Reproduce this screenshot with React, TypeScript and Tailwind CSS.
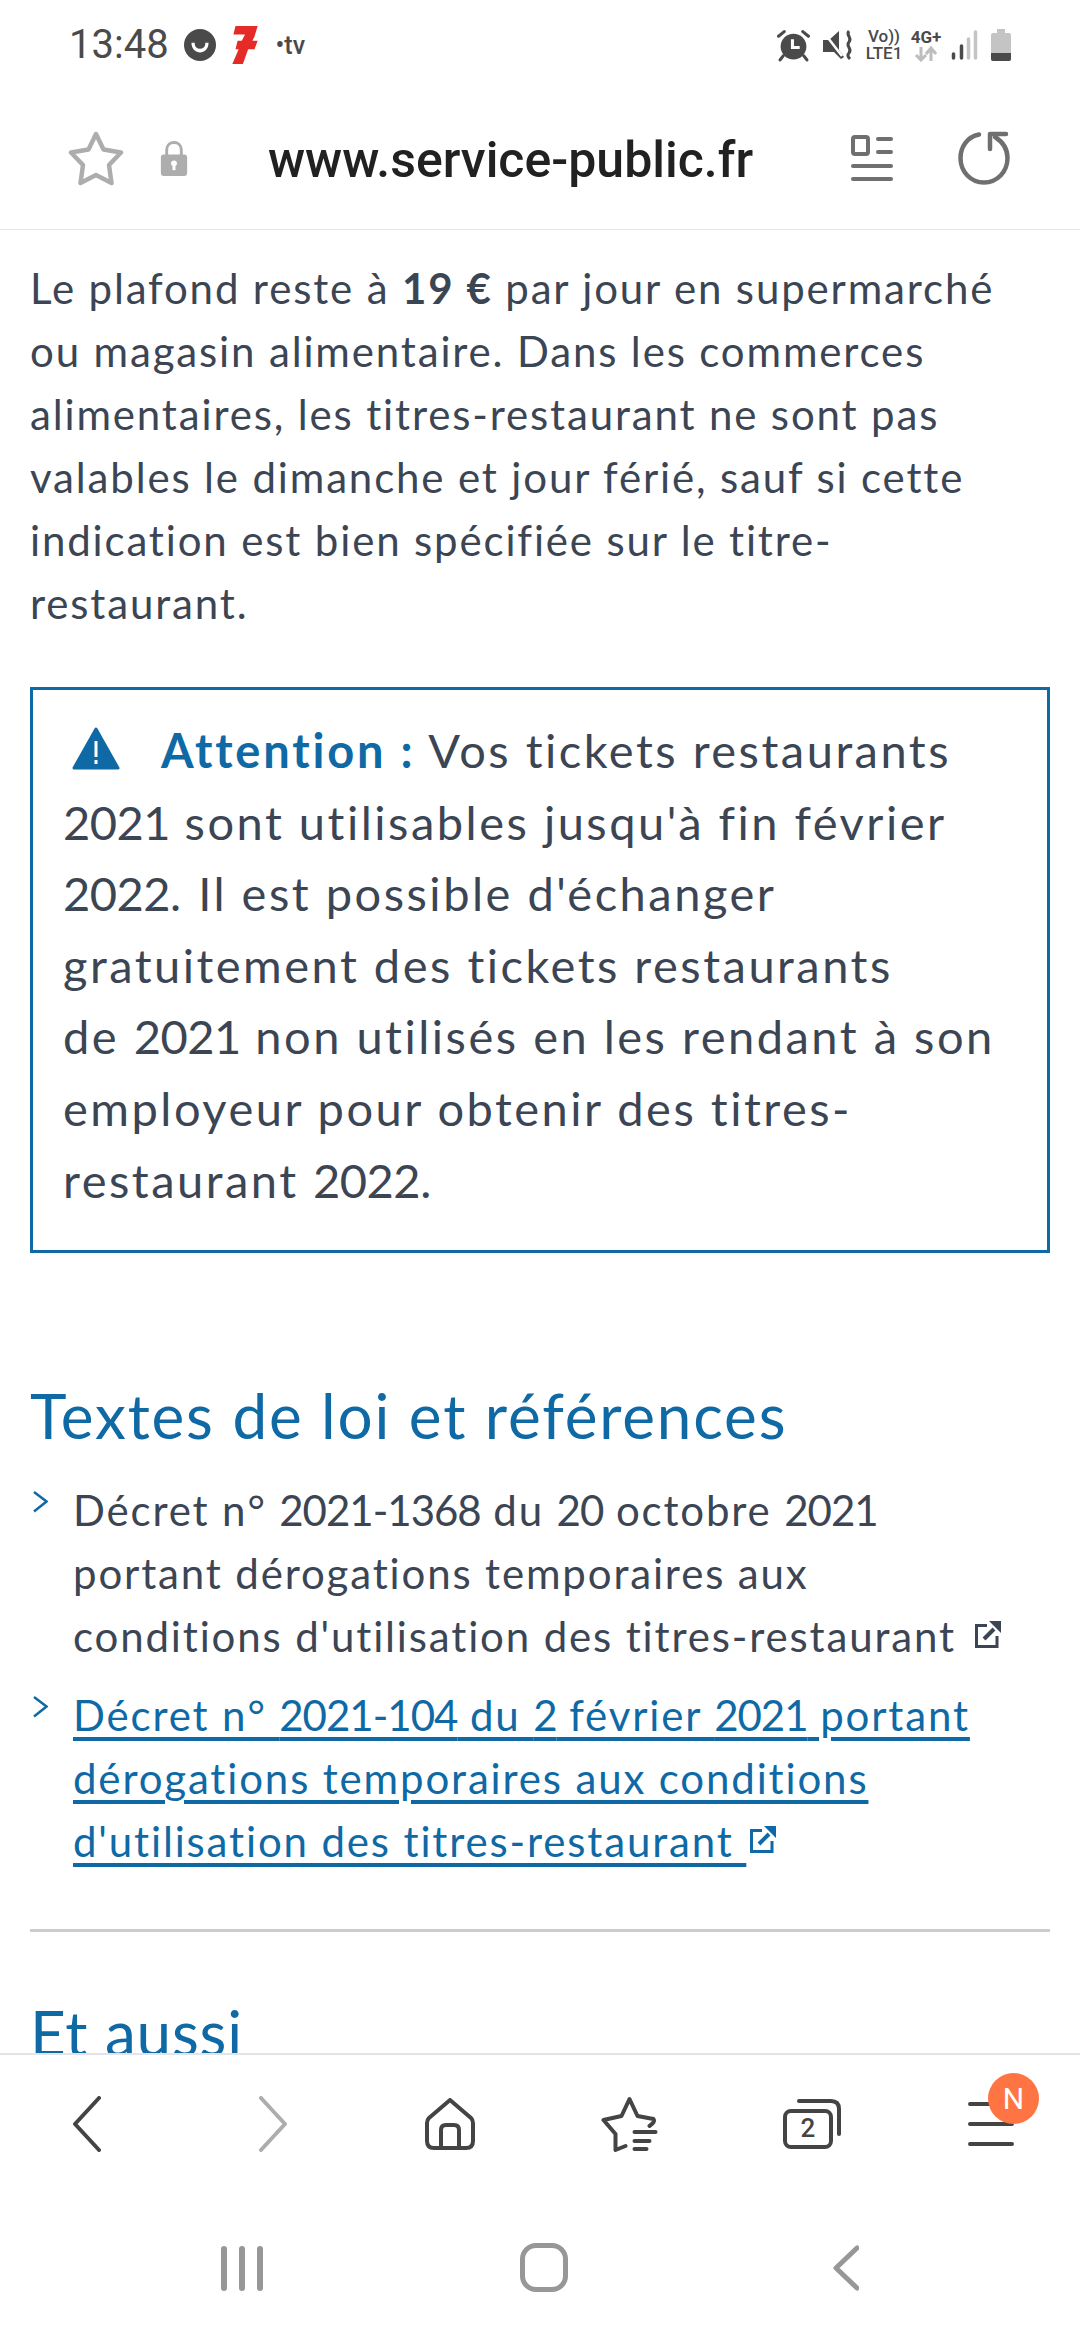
import React from 'react';

const ExternalIcon = ({ className }: { className: string }) => (
  <svg viewBox="0 0 26 27" className={className} fill="none" stroke="currentColor">
    <path d="M12 4.5H1.5V25.5H22V15" strokeWidth="3" />
    <path d="M9 18L19 8" strokeWidth="4" />
    <path d="M14 0H26V12Z" fill="currentColor" stroke="none" />
  </svg>
);

const Chevron = () => (
  <svg viewBox="0 0 15 22" className="w-[15px] h-[22px] shrink-0 mt-[12px] text-[#0f69a5]" fill="none" stroke="currentColor" strokeWidth="2.5">
    <path d="M1 1L13.5 10.5L1 20.5" />
  </svg>
);

// digits are narrower in the original face than in Lato
const Num = ({ children }: { children: React.ReactNode }) => <span className="tracking-[-1px]">{children}</span>;
const BoxNum = ({ children }: { children: React.ReactNode }) => <span className="tracking-[-0.5px]">{children}</span>;

const StatusBar = () => (
  <div className="h-[90px] shrink-0 flex items-center pl-[69px] pr-[69px] text-[#4a4a4a] font-['Roboto',sans-serif]">
    <span className="text-[40px] leading-none">13:48</span>
    <svg viewBox="0 0 30 30" className="w-[32px] h-[32px] ml-[15px]">
      <circle cx="15" cy="15" r="15" fill="#4a4a4a" />
      <path d="M7 13H23C23 19 19 22 15 22C11 22 7 19 7 13Z" fill="#fff" />
      <circle cx="15" cy="13.5" r="5" fill="#4a4a4a" />
    </svg>
    <svg viewBox="0 0 24 36" className="w-[26px] h-[38px] ml-[16px]">
      <polygon points="3,0 24,0 21,10 19,14 24,14 21,22 15,22 10,36 0,36 6,22 3,22 5,14 9,14 12,8 1,8" fill="#e52b27" />
    </svg>
    <span className="ml-[18px] text-[25px] leading-none font-medium">•tv</span>
    <div className="ml-auto flex items-center">
      <svg viewBox="0 0 32 32" className="w-[33px] h-[33px]">
        <circle cx="16" cy="17" r="12.5" fill="#4a4a4a" />
        <path d="M15 10V18H22" fill="none" stroke="#fff" strokeWidth="3" />
        <path d="M1.5 7L7 2.5M30.5 7L25 2.5M6 26L3 30M26 26L29 30" stroke="#4a4a4a" strokeWidth="3" strokeLinecap="round" />
      </svg>
      <svg viewBox="0 0 32 32" className="w-[32px] h-[32px] ml-[12px]">
        <path d="M1 11H7L17 2V21L22 28L19 30L12 23H1Z" fill="#4a4a4a" />
        <path d="M3 5L20 27" stroke="#fff" strokeWidth="2.5" />
        <path d="M27 2C23 6 31 9 27 13C23 17 31 20 27 24C25 26 26 28 28 30" fill="none" stroke="#4a4a4a" strokeWidth="3" />
      </svg>
      <div className="ml-[11px] w-[38px] flex flex-col items-center text-[17px] leading-[17px] font-medium">
        <span>Vo))</span>
        <span>LTE1</span>
      </div>
      <div className="ml-[8px] w-[30px] flex flex-col items-center">
        <span className="text-[17px] leading-[17px] font-bold whitespace-nowrap">4G+</span>
        <svg viewBox="0 0 22 16" className="w-[22px] h-[16px]" fill="none" strokeWidth="3">
          <path d="M6 1V13M1 9L6 14L11 9" stroke="#bdbdbd" />
          <path d="M16 15V3M11 8L16 2L21 8" stroke="#bdbdbd" />
        </svg>
      </div>
      <svg viewBox="0 0 26 30" className="w-[27px] h-[30px] ml-[10px]" strokeLinecap="round" strokeWidth="3.5" fill="none">
        <path d="M2 24V28" stroke="#4a4a4a" />
        <path d="M10 16V28" stroke="#4a4a4a" />
        <path d="M17 9V28" stroke="#c4c4c4" />
        <path d="M24 2V28" stroke="#c4c4c4" />
      </svg>
      <svg viewBox="0 0 20 32" className="w-[20px] h-[32px] ml-[13px]">
        <path d="M6 0H14V4H18Q20 4 20 6V30Q20 32 18 32H2Q0 32 0 30V6Q0 4 2 4H6Z" fill="#c4c4c4" />
        <path d="M0 24H20V30Q20 32 18 32H2Q0 32 0 30Z" fill="#4a4a4a" />
      </svg>
    </div>
  </div>
);

const UrlBar = () => (
  <div className="h-[140px] shrink-0 flex items-center border-b-[1px] border-[#e6e6e6] pl-[68px] text-[#212121] font-['Roboto',sans-serif]">
    <svg viewBox="0 0 56 56" className="w-[56px] h-[56px] mb-[2px]" fill="none" stroke="#adadad" strokeWidth="4.5" strokeLinejoin="round">
      <path d="M28 3L35.5 18.5L53 21.5L41 34L43.5 52L28 44L12.5 52L15 34L3 21.5L20.5 18.5Z" />
    </svg>
    <svg viewBox="0 0 27 37" className="w-[28px] h-[36px] ml-[36px] mb-[3px]">
      <path d="M6 16V10C6 0 21 0 21 10V16" fill="none" stroke="#adadad" strokeWidth="3" />
      <rect x="0" y="15" width="27" height="22" rx="3" fill="#adadad" />
      <circle cx="13.5" cy="24" r="3" fill="#fff" />
      <rect x="12" y="24" width="3" height="7" fill="#fff" />
    </svg>
    <span className="ml-[80px] w-[483px] text-[50px] leading-none font-medium whitespace-nowrap">www.service-public.fr</span>
    <svg viewBox="0 0 42 46" className="w-[44px] h-[46px] ml-[99px] mb-[4px]" fill="none" stroke="#6f6f6f" strokeWidth="4" strokeLinecap="round">
      <rect x="2" y="2" width="15" height="17" rx="2" />
      <path d="M27 4H40M27 17H40M2 31H40M2 44H40" />
    </svg>
    <svg viewBox="0 0 52 54" className="w-[52px] h-[54px] ml-[64px] mb-[4px]" fill="none" stroke="#6f6f6f" strokeWidth="4.5" strokeLinecap="round" strokeLinejoin="round">
      <path d="M21 3.5C9 6 2.5 16 2.5 27C2.5 41 13 51.5 26 51.5C39 51.5 49.5 41 49.5 27C49.5 18 45 11 37 6" />
      <path d="M48 3H32V18" />
    </svg>
  </div>
);

const Article = () => (
  <div className="flex-1 min-h-0 overflow-hidden px-[30px] pt-[27px] font-['Lato',sans-serif] text-[#3c4554]">
    <p className="text-[42px] leading-[63px] tracking-[1.85px]">
      Le plafond reste à <strong className="font-bold">19 €</strong> par jour en supermarché<br />
      ou magasin alimentaire. Dans les commerces<br />
      alimentaires, les titres-restaurant ne sont pas<br />
      valables le dimanche et jour férié, sauf si cette<br />
      indication est bien spécifiée sur le titre-<br />
      restaurant.
    </p>

    <div className="mt-[52px] border-[3px] border-[#0f69a5] pl-[30px] pr-[10px] pt-[25px] pb-[34px] text-[47px] leading-[71.6px] tracking-[2.5px] whitespace-nowrap">
      <svg viewBox="0 0 48 43" className="inline-block w-[48px] h-[43px] ml-[9px] mr-[41px] align-[-2px]">
        <path d="M24 2L46 41H2Z" fill="#0f69a5" stroke="#0f69a5" strokeWidth="3" strokeLinejoin="round" />
        <rect x="22.5" y="14" width="3" height="16" fill="#fff" />
        <rect x="22.5" y="33" width="3" height="4" fill="#fff" />
      </svg>
      <strong className="font-bold tracking-[2.8px] text-[#0f69a5]">Attention :</strong> Vos tickets restaurants<br />
      <BoxNum>2021</BoxNum> sont utilisables jusqu'à fin février<br />
      <BoxNum>2022</BoxNum>. Il est possible d'échanger<br />
      gratuitement des tickets restaurants<br />
      de <BoxNum>2021</BoxNum> non utilisés en les rendant à son<br />
      employeur pour obtenir des titres-<br />
      restaurant <BoxNum>2022</BoxNum>.
    </div>

    <h2 className="mt-[122px] text-[62px] leading-[80px] font-normal tracking-[1.8px] text-[#0f69a5]">Textes de loi et références</h2>

    <ul className="mt-[24px] flex flex-col gap-[16px] text-[42px] leading-[63px] tracking-[1.85px]">
      <li className="flex gap-[25px] pl-[3px]">
        <Chevron />
        <span>
          Décret n° <Num>2021-1368</Num> du <Num>20</Num> octobre <Num>2021</Num><br />
          portant dérogations temporaires aux<br />
          conditions d'utilisation des titres-restaurant
          <ExternalIcon className="inline-block w-[26px] h-[27px] ml-[19px] align-[4px] text-[#3c4554]" />
        </span>
      </li>
      <li className="flex gap-[25px] pl-[3px] text-[#0f69a5]">
        <Chevron />
        <span>
          <a href="#" className="underline decoration-[4px] underline-offset-[6px]">
            Décret n° <Num>2021-104</Num> du <Num>2</Num> février <Num>2021</Num> portant<br />
            dérogations temporaires aux conditions<br />
            d'utilisation des titres-restaurant&nbsp;
          </a>
          <ExternalIcon className="inline-block w-[26px] h-[27px] ml-[4px] align-[4px]" />
        </span>
      </li>
    </ul>

    <hr className="mt-[56px] border-t-[3px] border-[#cccccc]" />
    <h2 className="mt-[60px] text-[62px] leading-[80px] font-normal tracking-[0.8px] text-[#0f69a5]">Et aussi</h2>
  </div>
);

const BottomBar = () => (
  <div className="h-[149px] shrink-0 border-t-[2px] border-[#e4e4e4] flex items-start pt-[41px] pl-[73px]">
    <svg viewBox="0 0 28 56" className="w-[28px] h-[56px]" fill="none" stroke="#444" strokeWidth="4" strokeLinecap="round" strokeLinejoin="round">
      <path d="M26 2L2 28L26 54" />
    </svg>
    <svg viewBox="0 0 28 56" className="w-[28px] h-[56px] ml-[158px]" fill="none" stroke="#adadad" strokeWidth="4" strokeLinecap="round" strokeLinejoin="round">
      <path d="M2 2L26 28L2 54" />
    </svg>
    <svg viewBox="0 0 50 52" className="w-[50px] h-[52px] ml-[138px] mt-[2px]" fill="none" stroke="#444" strokeWidth="4" strokeLinejoin="round">
      <path d="M25 2L46 20Q48 22 48 25V43Q48 50 41 50H9Q2 50 2 43V25Q2 22 4 20Z" />
      <path d="M16 50V32Q16 27 21 27H29Q34 27 34 32V50" />
    </svg>
    <svg viewBox="0 0 56 56" className="w-[57px] h-[56px] ml-[126px]" fill="none" stroke="#444" strokeWidth="4" strokeLinecap="round" strokeLinejoin="round">
      <path d="M24 50L14 54L14 38L2 24L20 20L28 3L36 20L52 23Q54 26 48 30" />
      <path d="M33 36H54M33 45H48M33 53H45" />
    </svg>
    <div className="relative w-[58px] h-[50px] ml-[125px] mt-[3px]">
      <svg viewBox="0 0 58 50" className="w-[58px] h-[50px]" fill="none" stroke="#444" strokeWidth="4" strokeLinecap="round" strokeLinejoin="round">
        <rect x="2" y="12" width="46" height="36" rx="6" />
        <path d="M16 2H48Q56 2 56 10V35" />
      </svg>
      <span className="absolute left-[14px] top-[14px] w-[22px] text-center text-[26px] leading-[30px] font-medium text-[#444] font-['Roboto',sans-serif]">2</span>
    </div>
    <div className="relative w-[46px] h-[44px] ml-[127px] mt-[6px]">
      <svg viewBox="0 0 46 44" className="w-[46px] h-[44px]" fill="none" stroke="#444" strokeWidth="4" strokeLinecap="round">
        <path d="M2 2H44M2 22H44M2 42H44" />
      </svg>
      <span className="absolute left-[20px] top-[-29px] w-[51px] h-[51px] rounded-full bg-[#ff7443] text-white flex items-center justify-center text-[30px] font-['Roboto',sans-serif]">N</span>
    </div>
  </div>
);

const NavBar = () => (
  <div className="h-[138px] shrink-0 flex items-start pt-[41px] pl-[221px]">
    <div className="flex gap-[12px] h-[45px] mt-[3px]">
      <div className="w-[6px] h-full rounded-full bg-[#979797]" />
      <div className="w-[6px] h-full rounded-full bg-[#979797]" />
      <div className="w-[6px] h-full rounded-full bg-[#979797]" />
    </div>
    <div className="w-[48px] h-[49px] ml-[257px] rounded-[16px] border-[5px] border-[#979797]" />
    <svg viewBox="0 0 26 46" className="w-[26px] h-[46px] ml-[265px] mt-[2px]" fill="none" stroke="#979797" strokeWidth="5" strokeLinecap="round" strokeLinejoin="round">
      <path d="M24 3L3 23L24 43" />
    </svg>
  </div>
);

export default function App() {
  return (
    <div className="w-[1080px] h-[2340px] bg-white flex flex-col overflow-hidden">
      <StatusBar />
      <UrlBar />
      <Article />
      <BottomBar />
      <NavBar />
    </div>
  );
}
